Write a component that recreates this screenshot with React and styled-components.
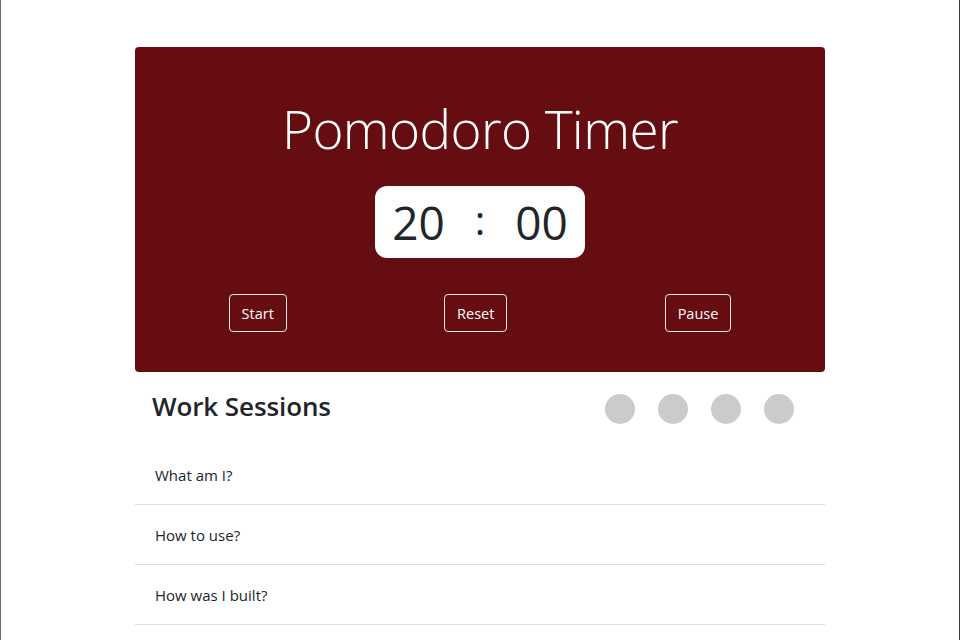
import React from "react";
import styled, { createGlobalStyle } from "styled-components";

const GlobalStyle = createGlobalStyle`
  html, body {
    margin: 0;
    padding: 0;
    background: #fff;
  }
  body {
    font-family: "Open Sans", "Noto Sans", "Liberation Sans", sans-serif;
    color: #212529;
  }
`;

const Frame = styled.div`
  min-height: 100vh;
  box-sizing: border-box;
  border-left: 1px solid #6e6e6e;
  border-right: 1px solid #3a3a3a;
  padding-top: 47px;
`;

const Container = styled.div`
  width: 690px;
  margin: 0 auto;
`;

const TimerCard = styled.section`
  background: #650d10;
  border-radius: 4px;
  height: 325px;
  box-sizing: border-box;
  padding-top: 49px;
  display: flex;
  flex-direction: column;
  align-items: center;
`;

const Title = styled.h1`
  margin: 0;
  font-weight: 300;
  font-size: 53px;
  line-height: 66px;
  color: #fff;
  letter-spacing: -0.6px;
`;

const Clock = styled.div`
  margin-top: 24px;
  width: 210px;
  height: 72px;
  border-radius: 12px;
  background: #fff;
  display: flex;
  align-items: center;
  justify-content: center;
  gap: 30px;
  font-size: 46px;
  color: #212529;
`;

const Colon = styled.span`
  font-size: 40px;
  margin-top: -6px;
`;

const Controls = styled.div`
  margin-top: 36px;
  width: 100%;
  box-sizing: border-box;
  padding: 0 15px;
  display: flex;
  justify-content: space-around;
`;

const OutlineButton = styled.button`
  font-family: inherit;
  font-size: 14.5px;
  color: #fff;
  background: transparent;
  border: 1px solid #f3e6e6;
  border-radius: 4px;
  height: 38px;
  padding: 0 12px;
  cursor: pointer;
`;

const SessionsHeader = styled.div`
  height: 73px;
  display: flex;
  align-items: center;
  justify-content: space-between;
  padding: 0 31px 0 17px;
`;

const SessionsTitle = styled.h2`
  margin: 0;
  font-size: 26px;
  font-weight: 600;
  color: #212529;
  letter-spacing: -0.1px;
  margin-top: -5px;
`;

const Dots = styled.div`
  display: flex;
  gap: 23px;
  margin-top: 1px;
`;

const Dot = styled.span`
  width: 30px;
  height: 30px;
  border-radius: 50%;
  background: ${({ done }) => (done ? "#650d10" : "#cbcbcb")};
`;

const Accordion = styled.div`
  display: flex;
  flex-direction: column;
`;

const AccordionItem = styled.button`
  height: 60px;
  text-align: left;
  background: #fff;
  border: none;
  border-bottom: 1px solid #dfdfdf;
  padding: 0 20px;
  font-family: inherit;
  font-size: 15px;
  color: #212529;
  cursor: pointer;
`;

const questions = ["What am I?", "How to use?", "How was I built?"];

export default function App() {
  return (
    <>
      <GlobalStyle />
      <Frame>
        <Container>
          <TimerCard>
            <Title>Pomodoro Timer</Title>
            <Clock>
              <span>20</span>
              <Colon>:</Colon>
              <span>00</span>
            </Clock>
            <Controls>
              <OutlineButton>Start</OutlineButton>
              <OutlineButton>Reset</OutlineButton>
              <OutlineButton>Pause</OutlineButton>
            </Controls>
          </TimerCard>
          <SessionsHeader>
            <SessionsTitle>Work Sessions</SessionsTitle>
            <Dots>
              {[0, 1, 2, 3].map((i) => (
                <Dot key={i} />
              ))}
            </Dots>
          </SessionsHeader>
          <Accordion>
            {questions.map((q) => (
              <AccordionItem key={q}>{q}</AccordionItem>
            ))}
          </Accordion>
        </Container>
      </Frame>
    </>
  );
}
